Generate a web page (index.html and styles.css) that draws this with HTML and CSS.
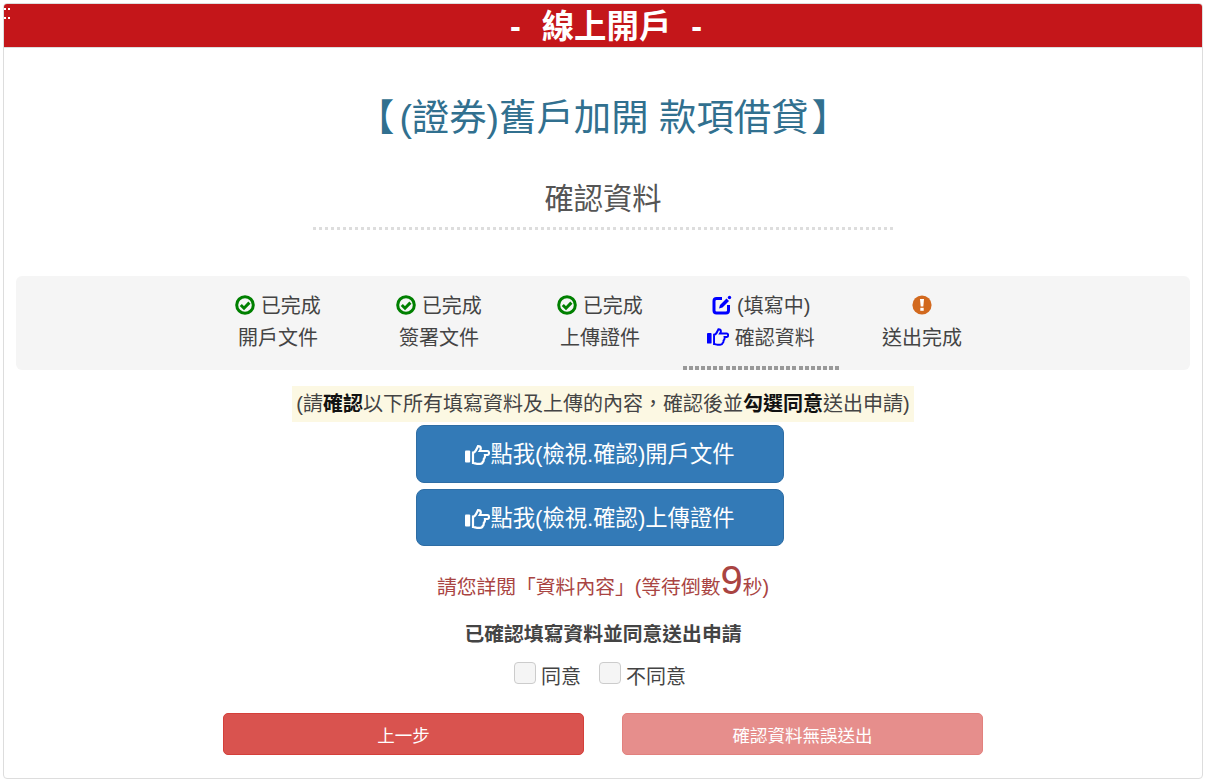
FILE: index.html
```html
<!DOCTYPE html>
<html lang="zh-Hant">
<head>
    <meta charset="UTF-8">
    <meta name="viewport" content="width=device-width, initial-scale=1.0">
    <title>線上開戶</title>
    <link rel="stylesheet" href="styles.css">
</head>
<body>
    <svg class="icon-defs" width="0" height="0">
        <symbol id="hand" viewBox="0 0 25 20">
            <rect x="0" y="5.500" width="5.200" height="12" rx="1"/>
            <path d="M8 7.500C10 7.500 11.200 5 12 3.200L13 1.200C14.800 1.200 15.800 2.200 15.800 3.500 15.800 4.500 15.300 5.200 14.800 6H22.500C23.600 6 24 7 24 8 24 9 23.600 10 22.500 10H20C20.200 11.500 19.800 13 18.800 14 18.900 15.500 18.500 16.500 17.700 17 17.500 18.200 16.500 18.800 15 18.800H12C10.500 18.800 9.500 18 8 18Z" fill="none" stroke="currentColor" stroke-width="2.200"/>
        </symbol>
        <symbol id="done" viewBox="0 0 20 20">
            <circle cx="10" cy="10" r="8.300" fill="none" stroke="currentColor" stroke-width="3"/>
            <path d="M5.800 10l3.200 3.200 5.400-5.600" fill="none" stroke="currentColor" stroke-width="3"/>
        </symbol>
        <symbol id="edit" viewBox="0 0 20 20">
            <path d="M10 3.500H4.500a2.500 2.500 0 0 0-2.500 2.500v9.500a2.500 2.500 0 0 0 2.500 2.500H14a2.500 2.500 0 0 0 2.500-2.500V10" fill="none" stroke="currentColor" stroke-width="3"/>
            <path d="M7 13.500l1-3.500 6.500-6.500 2.500 2.500-6.500 6.500z"/>
            <circle cx="17.500" cy="2.500" r="1.700"/>
        </symbol>
        <symbol id="warn" viewBox="0 0 20 20">
            <circle cx="10" cy="10" r="9.600"/>
            <path d="M8 4h4l-.7 7.500H8.700z" fill="#fff"/>
            <rect x="8.300" y="12.800" width="3.400" height="3" fill="#fff"/>
        </symbol>
    </svg>

    <div class="panel">
        <div class="panel-head">
            <span class="head-dots"></span>
            <h1>-<span class="head-word">線上開戶</span>-</h1>
        </div>

        <h2 class="case-title">【<span class="case-name">(證券)舊戶加開 款項借貸</span>】</h2>
        <div class="sub-title">確認資料</div>
        <div class="sub-line"></div>

        <div class="steps">
            <div class="step">
                <div><svg class="ico ico-done"><use href="#done"/></svg> 已完成</div>
                <div>開戶文件</div>
            </div>
            <div class="step">
                <div><svg class="ico ico-done"><use href="#done"/></svg> 已完成</div>
                <div>簽署文件</div>
            </div>
            <div class="step">
                <div><svg class="ico ico-done"><use href="#done"/></svg> 已完成</div>
                <div>上傳證件</div>
            </div>
            <div class="step step-active">
                <div><svg class="ico ico-edit"><use href="#edit"/></svg> (填寫中)</div>
                <div><svg class="ico-point"><use href="#hand"/></svg> 確認資料</div>
            </div>
            <div class="step">
                <div><svg class="ico ico-warn"><use href="#warn"/></svg></div>
                <div>送出完成</div>
            </div>
        </div>

        <div class="notice-wrap">
            <span class="notice">(請<b>確認</b>以下所有填寫資料及上傳的內容，確認後並<b>勾選同意</b>送出申請)</span>
        </div>

        <div class="doc-btns">
            <button class="doc-btn"><svg class="ico-hand"><use href="#hand"/></svg>點我(檢視.確認)開戶文件</button>
            <button class="doc-btn"><svg class="ico-hand"><use href="#hand"/></svg>點我(檢視.確認)上傳證件</button>
        </div>

        <div class="countdown">請您詳閱「資料內容」(等待倒數<span class="count-num">9</span>秒)</div>

        <div class="agree-title">已確認填寫資料並同意送出申請</div>
        <div class="agree-opts">
            <label><input type="checkbox" disabled>同意</label>
            <label><input type="checkbox" disabled>不同意</label>
        </div>

        <div class="actions">
            <button class="act-btn">上一步</button>
            <button class="act-btn act-off">確認資料無誤送出</button>
        </div>
    </div>
</body>
</html>
```

FILE: styles.css
```css
* {
    margin: 0;
    padding: 0;
    box-sizing: border-box;
}

body {
    background: #fff;
    color: #444;
    font-family: "Liberation Sans", "Noto Sans CJK TC", sans-serif;
    font-size: 20px;
    overflow: hidden;
}

.icon-defs {
    position: absolute;
}

.panel {
    height: 776px;
    margin: 3px;
    border: 1px solid #ddd;
    border-radius: 4px;
    text-align: center;
}

.panel-head {
    position: relative;
    height: 44px;
    background: #c4161a;
    border-bottom: 1px solid #ddd;
    border-radius: 3px 3px 0 0;
}

.panel-head h1 {
    padding-left: 6px;
    color: #fff;
    font-size: 32.400px;
    line-height: 47px;
    font-weight: bold;
}

.head-word {
    margin: 0 20px 0 21px;
}

.head-dots {
    position: absolute;
    top: 4px;
    left: 0;
    width: 6px;
    height: 11px;
    border-top: 2px dotted #fff;
    border-bottom: 2px dotted #fff;
}

.case-title {
    margin-top: 50px;
    color: #31708f;
    font-size: 37.400px;
    font-weight: normal;
    line-height: 40px;
}

.case-name {
    margin: 0 3px 0 5px;
}

.sub-title {
    margin-top: 41px;
    color: #555;
    font-size: 29.300px;
    line-height: 40px;
}

.sub-line {
    width: 580px;
    height: 3px;
    margin: 8px auto 0;
    background: repeating-linear-gradient(90deg, #ddd 0 3px, transparent 3px 6.010px);
}

.steps {
    display: flex;
    justify-content: center;
    gap: 5px;
    height: 94px;
    margin: 46px 12px 0;
    padding-right: 6px;
    background: #f5f5f5;
    border-radius: 6px;
}

.step {
    width: 156px;
    padding-top: 14px;
    line-height: 32px;
}

.step-active {
    background: repeating-linear-gradient(90deg, #999 0 4px, transparent 4px 6.080px) bottom / 100% 4px no-repeat;
}

.ico {
    width: 20px;
    height: 20px;
    vertical-align: -2px;
    fill: currentColor;
}

.ico-done {
    color: #008000;
}

.ico-edit {
    color: #0000ff;
}

.ico-warn {
    color: #d2691e;
}

.ico-point {
    width: 22px;
    height: 18px;
    vertical-align: -1px;
    color: #0000ff;
    fill: currentColor;
}

.notice-wrap {
    margin-top: 16px;
    height: 39px;
}

.notice {
    display: inline-block;
    height: 36px;
    padding: 0 4px;
    background: #fcf8e3;
    line-height: 36px;
}

.notice b {
    color: #111;
}

.doc-btns {
    display: flex;
    flex-direction: column;
    align-items: center;
    gap: 6px;
    padding-right: 6px;
}

button {
    font-family: inherit;
    color: #fff;
    cursor: pointer;
}

.doc-btn {
    width: 368px;
    height: 57.500px;
    padding-bottom: 3px;
    background: #337ab7;
    border: 1px solid #2e6da4;
    border-radius: 8px;
    font-size: 22.300px;
}

.ico-hand {
    width: 25px;
    height: 20px;
    vertical-align: -3px;
    color: #fff;
    fill: currentColor;
}

.countdown {
    margin-top: 9px;
    height: 50px;
    color: #a94442;
    font-size: 19.800px;
    line-height: 50px;
}

.count-num {
    font-size: 40px;
}

.agree-title {
    margin-top: 15px;
    font-weight: bold;
    font-size: 19.800px;
    line-height: 28px;
}

.agree-opts {
    display: flex;
    justify-content: center;
    gap: 18px;
    margin-top: 14px;
    padding-right: 6px;
    line-height: 30px;
}

.agree-opts label {
    display: flex;
    align-items: flex-start;
    gap: 5px;
}

.agree-opts input {
    appearance: none;
    width: 22px;
    height: 22px;
    background: #f5f5f5;
    border: 1px solid #ccc;
    border-radius: 4px;
}

.actions {
    display: flex;
    justify-content: center;
    gap: 38px;
    margin-top: 21px;
}

.act-btn {
    width: 361px;
    height: 42px;
    background: #d9534f;
    border: 1px solid #d43f3a;
    border-radius: 5px;
    font-size: 17.500px;
}

.act-off {
    opacity: 0.65;
}
```
